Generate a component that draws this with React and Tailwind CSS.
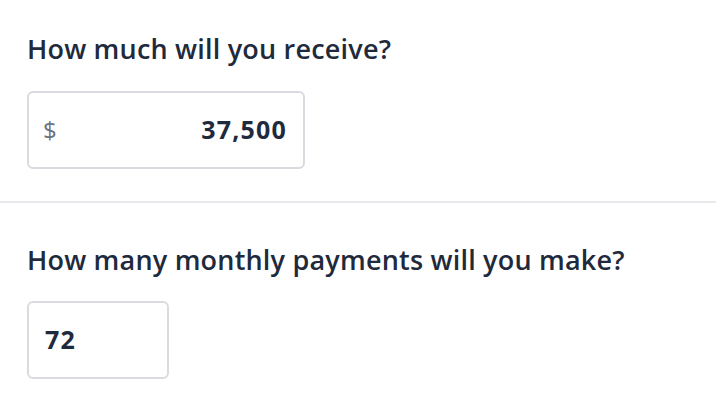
import React, { useState } from 'react';

export default function App() {
  const [amount, setAmount] = useState('37,500');
  const [months, setMonths] = useState('72');

  return (
    <div className="bg-white w-[716px] h-[414px] font-['Open_Sans',sans-serif] text-[#1f2a3d]">
      {/* Amount */}
      <section className="px-[27px] pt-[31px] pb-[32px]">
        <h2 className="text-[27px] leading-[36px] font-semibold tracking-[0.2px]">How much will you receive?</h2>
        <div className="mt-[24px] w-[278px] h-[78px] flex items-center justify-between border-2 border-[#d9dbe0] rounded-[6px] pl-[14px] pr-[16px]">
          <span className="text-[24px] text-[#6b7280]">$</span>
          <input
            value={amount}
            onChange={e => setAmount(e.target.value)}
            className="w-[180px] text-right text-[25px] font-bold tracking-[1.2px] text-[#1f2a3d] outline-none bg-transparent"
          />
        </div>
      </section>

      <div className="h-[2px] bg-[#e8e9ec]" />

      {/* Months */}
      <section className="px-[27px] pt-[39px]">
        <h2 className="text-[27px] leading-[36px] font-semibold tracking-[0.2px]">How many monthly payments will you make?</h2>
        <div className="mt-[23px] w-[142px] h-[78px] flex items-center border-2 border-[#d9dbe0] rounded-[6px] px-[16px]">
          <input
            value={months}
            onChange={e => setMonths(e.target.value)}
            className="w-full text-[25px] font-bold tracking-[1.2px] text-[#1f2a3d] outline-none bg-transparent"
          />
        </div>
      </section>
    </div>
  );
}
